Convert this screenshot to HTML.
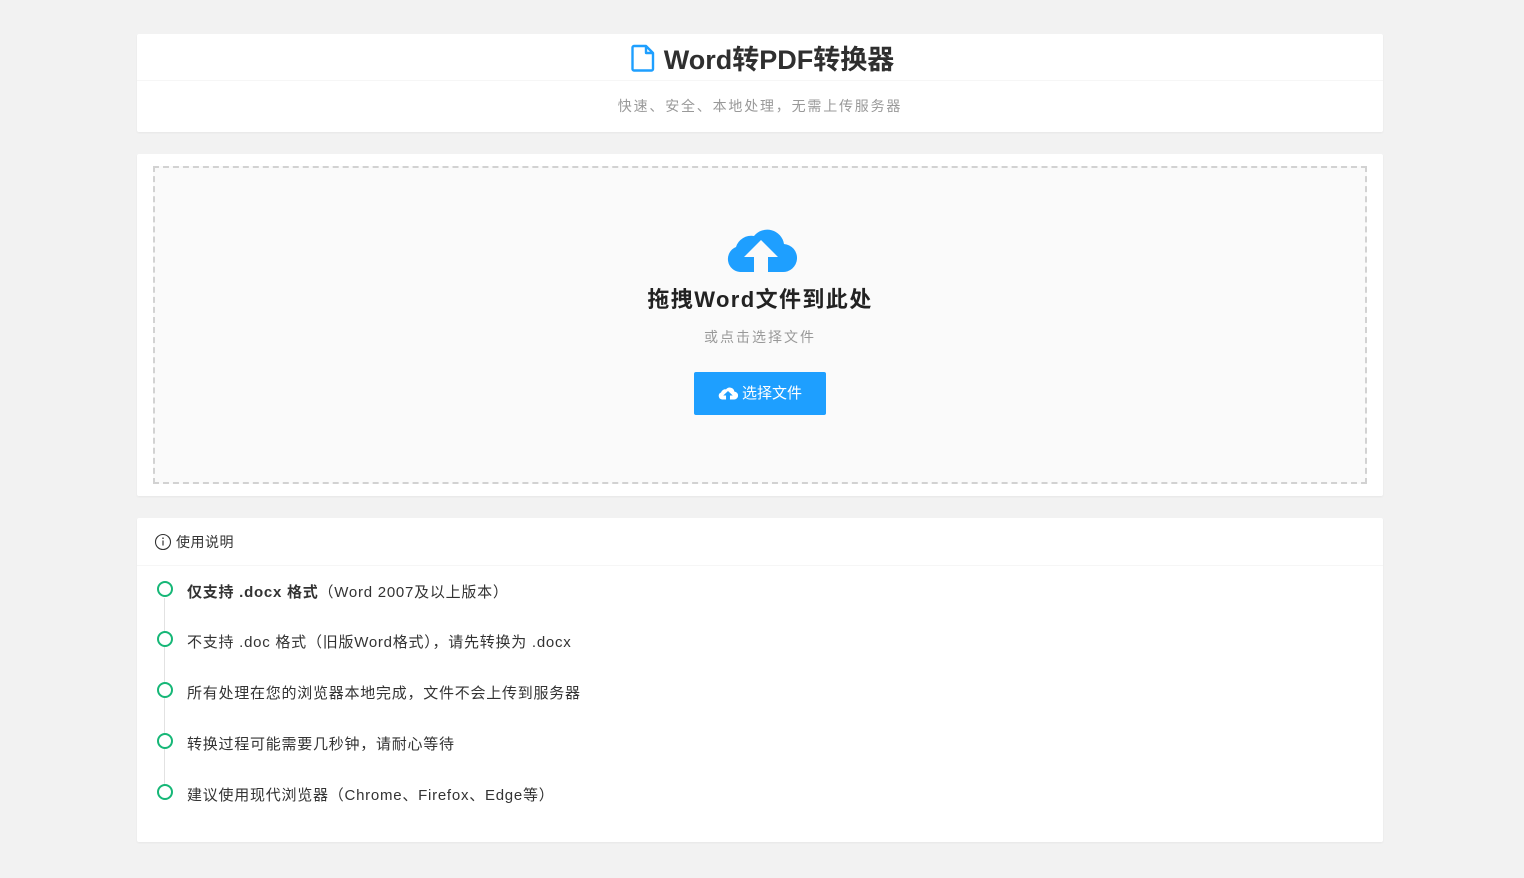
<!DOCTYPE html>
<html><head><meta charset="utf-8"><style>
*{box-sizing:border-box;margin:0;padding:0}
body{background:#f2f2f2;width:1524px;height:878px;font-family:"Liberation Sans","Noto Sans CJK SC",sans-serif;color:#333;position:relative}
.card{position:absolute;left:137px;width:1246px;background:#fff;border-radius:2px;box-shadow:0 1px 2px rgba(0,0,0,.05)}
.c1{top:34px;height:98px}
.c1 .h{height:47px;border-bottom:1px solid #f6f6f6;text-align:center;font-size:27px;font-weight:bold;line-height:52px;color:#2f2f2f;padding-left:4px}
.c1 .s{text-align:center;color:#999;font-size:14px;line-height:50px;letter-spacing:1.8px}
.c2{top:154px;height:342px}
.drop{position:absolute;left:16px;top:12px;width:1214px;height:318px;border:2px dashed #d2d2d2;background:#fafafa;text-align:center}
.t{position:absolute;left:0;right:0;top:114px;font-size:22px;font-weight:bold;color:#222;letter-spacing:1.4px}
.st{position:absolute;left:0;right:0;top:159px;font-size:14px;color:#999;letter-spacing:2px}
.btn{position:absolute;left:539px;top:204px;width:132px;height:43px;background:#1e9fff;color:#fff;font-size:15px;line-height:43px;border-radius:2px}
.c3{top:518px;height:324px}
.c3 .h{height:48px;border-bottom:1px solid #f6f6f6;padding-left:17px;line-height:48px;font-size:14px;display:flex;align-items:center;gap:4px;letter-spacing:.5px}
.item{position:absolute;left:50px;font-size:15px;color:#333;letter-spacing:.75px}
.dot{position:absolute;left:20px;width:16px;height:16px;border:2px solid #16b777;border-radius:50%;background:#fff}
.line{position:absolute;left:27px;top:80px;width:1px;height:190px;background:#e2e2e2}
</style></head><body>
<div class="card c1"><div class="h"><svg width="26" height="28" viewBox="0 0 26 28" style="vertical-align:-3px;margin-right:8px"><path d="M4 2h12l7 7v16a1.5 1.5 0 0 1-1.5 1.5h-17.5A1.5 1.5 0 0 1 2.5 25V3.5A1.5 1.5 0 0 1 4 2z M16 2v7h7" fill="none" stroke="#1e9fff" stroke-width="2.4" stroke-linejoin="round"/></svg>Word转PDF转换器</div><div class="s">快速、安全、本地处理，无需上传服务器</div></div>
<div class="card c2"><div class="drop">
<svg style="position:absolute;left:570px;top:56px" width="72" height="50" viewBox="0 0 70 50"><path d="M14 48A13 13 0 0 1 10 23 A16 16 0 0 1 28 12 A17 17 0 0 1 58 20 A14 14 0 0 1 56 48Z" fill="#1e9fff"/><path d="M35 16L52 33H42V48H28V33H18Z" fill="#fafafa"/></svg>
<div class="t">拖拽Word文件到此处</div><div class="st">或点击选择文件</div>
<div class="btn"><svg width="20" height="14" viewBox="0 0 70 50" style="vertical-align:-2px;margin-right:4px"><path d="M14 48A13 13 0 0 1 10 23 A16 16 0 0 1 28 12 A17 17 0 0 1 58 20 A14 14 0 0 1 56 48Z" fill="#fff"/><path d="M35 18L52 34H42V48H28V34H18Z" fill="#1e9fff"/></svg>选择文件</div>
</div></div>
<div class="card c3"><div class="h"><svg width="18" height="18" viewBox="0 0 18 18"><circle cx="9" cy="9" r="7.5" fill="none" stroke="#333" stroke-width="1.1"/><path d="M9 7.5v5" stroke="#333" stroke-width="1.2"/><circle cx="9" cy="5.2" r=".8" fill="#333"/></svg>使用说明</div>
<div class="line"></div>
<div class="dot" style="top:63px"></div><div class="item" style="top:63px"><b>仅支持 .docx 格式</b>（Word 2007及以上版本）</div>
<div class="dot" style="top:113px"></div><div class="item" style="top:113px">不支持 .doc 格式（旧版Word格式），请先转换为 .docx</div>
<div class="dot" style="top:164px"></div><div class="item" style="top:164px">所有处理在您的浏览器本地完成，文件不会上传到服务器</div>
<div class="dot" style="top:215px"></div><div class="item" style="top:215px">转换过程可能需要几秒钟，请耐心等待</div>
<div class="dot" style="top:266px"></div><div class="item" style="top:266px">建议使用现代浏览器（Chrome、Firefox、Edge等）</div>
</div>
</body></html>
